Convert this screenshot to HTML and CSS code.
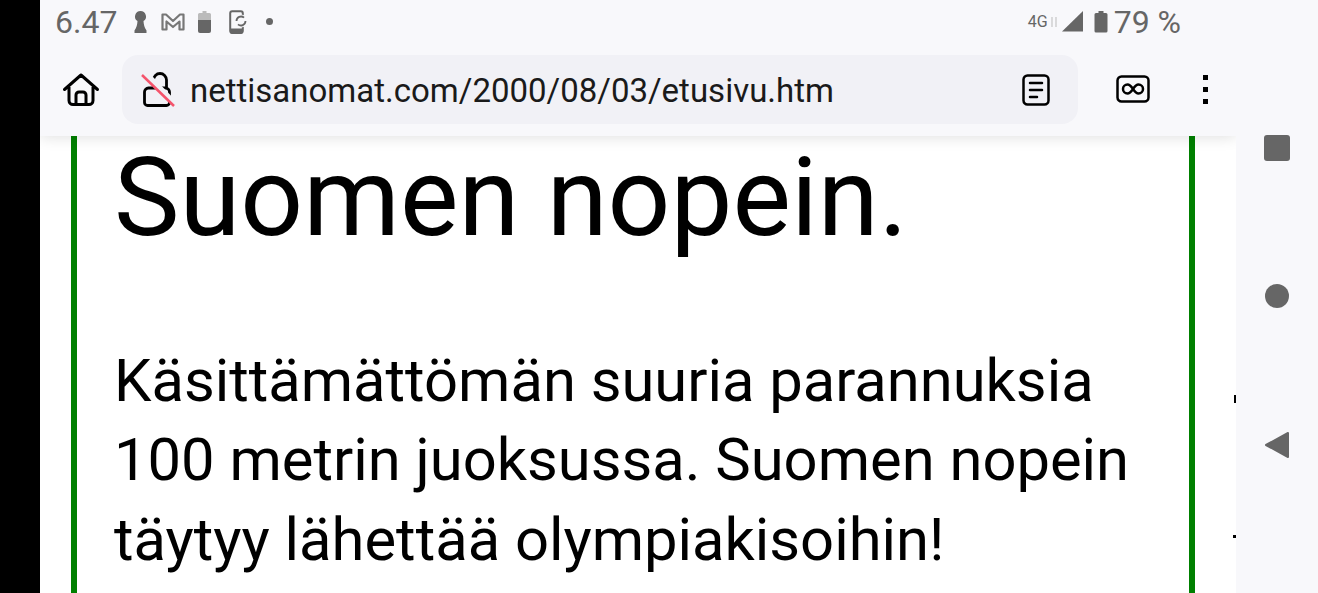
FILE: index.html
```html
<!DOCTYPE html>
<html>
<head>
  <link rel="stylesheet" href="styles.css">
</head>

<body>
  <div class="bezel"></div>

  <div class="screen">
    <header class="topbar">
      <!-- Android status bar -->
      <div class="status">
        <div class="status-left">
          <span class="clock">6.47</span>
          <svg class="st-icon" width="15" height="24" viewBox="0 0 15 24"><path fill="#666" d="M7.500 1a5.500 5.500 0 0 1 3 10.100c.2 3.500.9 6.500 3 9.400V23h-12v-2.500c2.100-2.900 2.800-5.900 3-9.400A5.500 5.500 0 0 1 7.500 1z"/></svg>
          <svg class="st-icon" width="24" height="20" viewBox="0 0 24 20"><path fill="none" stroke="#777" stroke-width="2.200" stroke-linejoin="round" d="M1.500 2.500h3.500l7 6.500 7-6.500h3.500v15h-4V9.500l-6.500 5.500-6.500-5.500v8h-4z"/></svg>
          <svg class="st-icon" width="13" height="22" viewBox="0 0 13 22"><path fill="#bbb" d="M4.500 0h4v2h3a1.500 1.500 0 0 1 1.500 1.500V9H0V3.500A1.500 1.500 0 0 1 1.500 2h3z"/><path fill="#666" d="M0 9h13v11a2 2 0 0 1-2 2H2a2 2 0 0 1-2-2z"/></svg>
          <svg class="st-icon st-phone" width="19" height="24" viewBox="0 0 19 24"><rect x="1.200" y="1.200" width="12.600" height="21.600" rx="2" fill="none" stroke="#666" stroke-width="2"/><path fill="#666" d="M1 18.500h13V22a2 2 0 0 1-2 2H3a2 2 0 0 1-2-2z"/><circle cx="12" cy="11" r="6.500" fill="#f8f8fb"/><path fill="none" stroke="#666" stroke-width="1.800" d="M7.500 11a4.500 4.500 0 0 1 7.500-3.300M16.500 11a4.500 4.500 0 0 1-7.500 3.300"/></svg>
          <span class="dot"></span>
        </div>
        <div class="status-right">
          <span class="net">4G</span>
          <svg class="arrows" width="8" height="12" viewBox="0 0 8 12"><path fill="none" stroke="#bbb" d="M2 1v10M6 1v10"/></svg>
          <svg class="signal" width="21" height="21" viewBox="0 0 21 21"><path fill="#666" d="M21 0v20.500H0z"/></svg>
          <svg class="battery" width="14" height="22" viewBox="0 0 14 22"><path fill="#666" d="M4.500 0h5v2H12a1.500 1.500 0 0 1 1.500 1.500V20a1.500 1.500 0 0 1-1.500 1.500H2A1.500 1.500 0 0 1 .5 20V3.500A1.500 1.500 0 0 1 2 2h2.500z"/></svg>
          <span class="percent">79 %</span>
        </div>
      </div>

      <!-- Browser toolbar -->
      <div class="toolbar">
        <svg class="home" width="38" height="34" viewBox="0 0 38 34"><path fill="none" stroke="#000" stroke-width="3" stroke-linejoin="round" stroke-linecap="round" d="M2.500 16.500 19 2l16.500 14.500M7 14v13.500a4 4 0 0 0 4 4h16a4 4 0 0 0 4-4V14M14 31V22a3 3 0 0 1 3-3h4a3 3 0 0 1 3 3v9"/></svg>
        <div class="urlbar">
          <svg class="lock" width="34" height="36" viewBox="0 0 34 36"><path fill="none" stroke="#000" stroke-width="2.800" stroke-linejoin="round" d="M12.500 16V8a6.500 6.500 0 0 1 13 0v8M3.500 20a4 4 0 0 1 4-4h17a4 4 0 0 1 4 4v10.500a3 3 0 0 1-3 3h-19a3 3 0 0 1-3-3z"/><path stroke="#f1f1f6" stroke-width="6" d="M3 0 34 32"/><path stroke="#f5546c" stroke-width="2.500" d="M1 3 33 34"/></svg>
          <span class="url">nettisanomat.com/2000/08/03/etusivu.htm</span>
          <svg class="reader" width="28" height="32" viewBox="0 0 28 32"><rect x="1.500" y="1.500" width="25" height="29" rx="4" fill="none" stroke="#000" stroke-width="2.500"/><path stroke="#000" stroke-width="2.500" stroke-linecap="round" d="M8 9h12M8 16h12M8 23h7"/></svg>
        </div>
        <svg class="tabs" width="34" height="28" viewBox="0 0 34 28"><rect x="1.500" y="1.500" width="31" height="25" rx="4" fill="none" stroke="#000" stroke-width="2.500"/><path fill="none" stroke="#000" stroke-width="2.500" d="M17 14c-2-3-3.500-4.500-5.500-4.500a4.500 4.500 0 0 0 0 9c2 0 3.500-1.500 5.500-4.500s3.500-4.500 5.500-4.500a4.500 4.500 0 0 1 0 9c-2 0-3.500-1.500-5.500-4.500z"/></svg>
        <div class="menu"><span></span><span></span><span></span></div>
      </div>
    </header>

    <main class="page">
      <div class="article">
        <h1>Suomen nopein.</h1>
        <p>Käsittämättömän suuria parannuksia 100 metrin juoksussa. Suomen nopein täytyy lähettää olympiakisoihin!</p>
      </div>
      <i class="speck speck-a"></i>
      <i class="speck speck-b"></i>
    </main>
  </div>

  <nav class="navbar">
    <span class="nav-square"></span>
    <span class="nav-circle"></span>
    <svg width="26" height="28" viewBox="0 0 26 28"><path fill="#666" stroke="#666" stroke-width="2" stroke-linejoin="round" d="M24 2v24L2 14z"/></svg>
  </nav>
</body>
</html>
```

FILE: styles.css
```css
* {
  box-sizing: border-box;
}

html, body {
  height: 100%;
}

body {
  margin: 0;
  display: flex;
  overflow: hidden;
  background: #fff;
  font-family: Roboto, sans-serif;
}

svg {
  display: block;
  flex: none;
}

.bezel {
  width: 40px;
  background: #000;
}

.screen {
  width: 1196px;
  display: flex;
  flex-direction: column;
}

.topbar {
  height: 136px;
  flex: none;
  background: #f8f8fb;
  position: relative;
  z-index: 1;
  box-shadow: 0 1px 14px rgba(0, 0, 0, 0.13);
}

/* Status bar */
.status {
  height: 43px;
  padding: 0 55px 0 15px;
  display: flex;
  justify-content: space-between;
  align-items: center;
  color: #666;
}

.status-left, .status-right {
  display: flex;
  align-items: center;
}

.clock {
  font-size: 32px;
  width: 78px;
}

.st-icon {
  margin-right: 13px;
}

.st-phone {
  margin: 0 18px 0 5px;
}

.dot {
  width: 7px;
  height: 7px;
  border-radius: 50%;
  background: #666;
}

.net {
  font-size: 16px;
}

.arrows {
  margin: 0 4px 0 2px;
}

.signal {
  margin-right: 11px;
}

.battery {
  margin-right: 6px;
}

.percent {
  font-size: 32px;
}

/* Browser toolbar */
.toolbar {
  height: 93px;
  display: flex;
  align-items: flex-start;
  padding: 12px 0 0 22px;
}

.home {
  margin: 18px 22px 0 0;
}

.urlbar {
  width: 956px;
  height: 69px;
  display: flex;
  align-items: center;
  padding: 0 28px 0 19px;
  background: #f1f1f6;
  border-radius: 16px;
}

.url {
  flex: 1;
  margin-left: 15px;
  padding-top: 2px;
  font-size: 33px;
  color: #1a1a1a;
}

.tabs {
  margin: 20px 0 0 38px;
}

.menu {
  margin: 20px 0 0 53px;
  display: flex;
  flex-direction: column;
  gap: 7px;
}

.menu span {
  width: 5px;
  height: 5px;
  background: #000;
}

/* Page content, the toolbar sits on top of it */
.page {
  flex: 1;
  position: relative;
  padding: 0 41px 0 31px;
}

.article {
  height: 100%;
  padding: 0 30px 0 37px;
  border-left: 6px solid #008000;
  border-right: 6px solid #008000;
  color: #000;
}

h1 {
  margin: 0;
  padding-top: 4px;
  font-size: 110.300px;
  line-height: 116px;
  font-weight: 400;
}

p {
  margin: 0;
  padding-top: 85.500px;
  font-size: 59.700px;
  line-height: 79.500px;
}

.speck {
  position: absolute;
  right: 0;
  width: 2px;
  height: 8px;
  background: #000;
}

.speck-a {
  top: 259px;
}

.speck-b {
  top: 399px;
  width: 3px;
  height: 3px;
}

/* Android navigation */
.navbar {
  width: 82px;
  height: 100%;
  padding: 135px 0 0;
  background: #f8f8fb;
  position: relative;
  z-index: 2;
  display: flex;
  flex-direction: column;
  align-items: center;
  gap: 123px;
}

.nav-square {
  width: 26px;
  height: 26px;
  background: #666;
  border-radius: 3px;
}

.nav-circle {
  width: 24px;
  height: 24px;
  border-radius: 50%;
  background: #666;
}
```
